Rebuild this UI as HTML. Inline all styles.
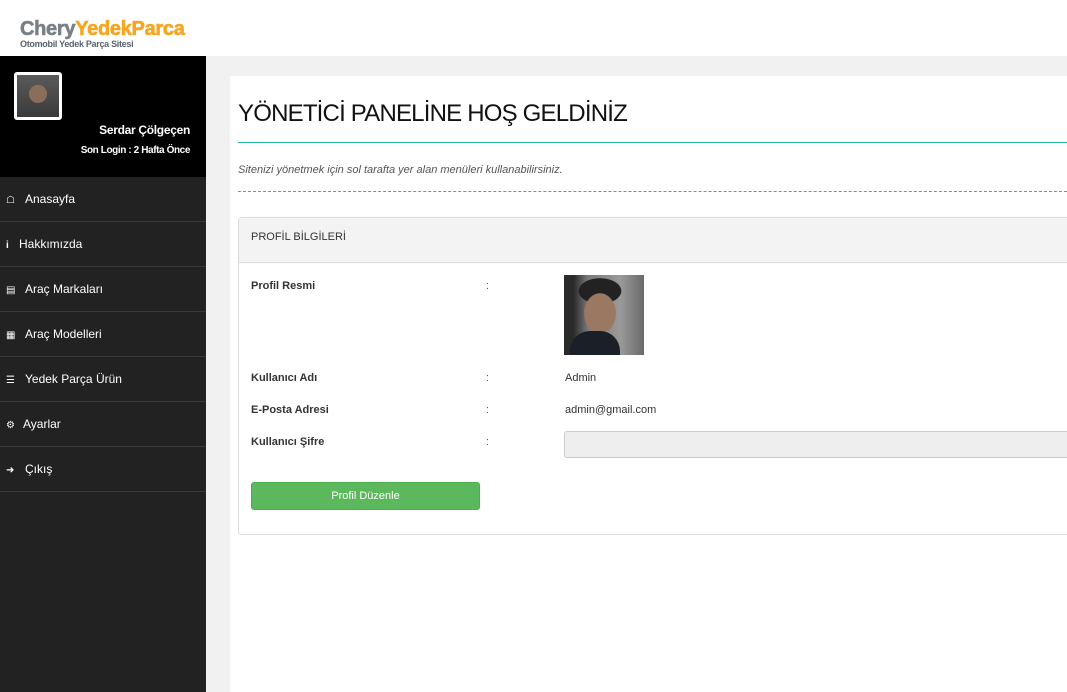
<!DOCTYPE html>
<html><head><meta charset="utf-8"><style>
*{margin:0;padding:0;box-sizing:border-box}
body{width:1067px;height:692px;overflow:hidden;background:#f1f1f1;font-family:"Liberation Sans","DejaVu Sans",sans-serif;position:relative}
.hdr{position:absolute;left:0;top:0;width:1067px;height:56px;background:#fff}
.logo{position:absolute;left:20px;top:18px;font-weight:bold;font-size:20px;letter-spacing:-0.3px;line-height:22px;-webkit-text-stroke:0.6px}
.logo .a{color:#7a8088}.logo .b{color:#f5a623}
.logo .s{position:absolute;left:0;top:21px;font-size:9px;color:#5a6470;white-space:nowrap;line-height:10px;-webkit-text-stroke:0}
.side{position:absolute;left:0;top:56px;width:206px;height:636px;background:#222}
.prof{height:121px;background:#000;position:relative}
.av{position:absolute;left:14px;top:16px;width:48px;height:48px;border:3px solid #fff;border-radius:3px;background:radial-gradient(circle at 50% 45%,#8a6e5c 0 28%,transparent 30%),linear-gradient(#5a5a5a,#3a3a3a)}
.nm{position:absolute;right:16px;top:67px;color:#fff;font-weight:bold;font-size:12px;letter-spacing:-0.3px}
.sl{position:absolute;right:16px;top:89px;color:#fff;font-weight:bold;font-size:10px;letter-spacing:-0.4px}
.mi{height:45px;border-bottom:1px solid #3a3a3a;color:#fff;font-size:12px;line-height:44px;padding-left:6px}
.mi i{display:inline-block;width:19px;font-style:normal;font-size:10px}
.main{position:absolute;left:230px;top:76px;width:837px;height:616px;background:#fff}
h1{position:absolute;left:8px;top:24px;font-size:24px;font-weight:normal;color:#111;letter-spacing:-0.8px}
.tl{position:absolute;left:8px;top:66px;right:0;border-top:1px solid #2bb5a5}
.it{position:absolute;left:8px;top:88px;font-style:italic;font-size:11px;color:#555}
.dl{position:absolute;left:8px;top:115px;right:0;border-top:1px dashed #2bb5a5}
.box{position:absolute;left:8px;top:141px;width:840px;height:318px;border:1px solid #ddd;border-radius:3px}
.bh{height:45px;background:#f3f3f3;border-bottom:1px solid #ddd;font-size:11px;color:#333;line-height:38px;padding-left:12px}
.lb{position:absolute;left:12px;font-size:11px;color:#333;font-weight:bold}
.co{position:absolute;left:247px;font-size:11px;color:#555}
.vl{position:absolute;left:326px;font-size:11px;color:#333}
.ph{position:absolute;left:325px;top:57px;width:80px;height:80px;background:radial-gradient(ellipse 22px 28px at 45% 48%,#9a7862 0 70%,transparent 74%),radial-gradient(ellipse 30px 18px at 45% 20%,#222 0 70%,transparent 72%),linear-gradient(90deg,#2a2a2a 0 12%,#7a7a7a 30%,#9a9a9a 70%,#6a6a6a);}
.ph:after{content:"";position:absolute;left:6px;bottom:0;width:50px;height:24px;background:#1a1f28;border-radius:20px 20px 0 0}
.inp{position:absolute;left:325px;top:213px;width:520px;height:27px;background:#eee;border:1px solid #ccc;border-radius:3px}
.btn{position:absolute;left:12px;top:264px;width:229px;height:28px;background:#5cb85c;border:1px solid #4cae4c;border-radius:3px;color:#fff;font-size:11px;text-align:center;line-height:26px}
</style></head><body>
<div class="hdr"><div class="logo"><span class="a">Chery</span><span class="b">YedekParca</span><div class="s">Otomobil Yedek Parça Sitesi</div></div></div>
<div class="side">
<div class="prof"><div class="av"></div><div class="nm">Serdar Çölgeçen</div><div class="sl">Son Login : 2 Hafta Önce</div></div>
<div class="mi"><i>&#9750;</i>Anasayfa</div>
<div class="mi"><i style="width:13px;font-weight:bold">i</i>Hakkımızda</div>
<div class="mi"><i>&#9636;</i>Araç Markaları</div>
<div class="mi"><i>&#9638;</i>Araç Modelleri</div>
<div class="mi"><i>&#9776;</i>Yedek Parça Ürün</div>
<div class="mi"><i style="width:17px">&#9881;</i>Ayarlar</div>
<div class="mi"><i>&#10140;</i>Çıkış</div>
</div>
<div class="main">
<h1>YÖNETİCİ PANELİNE HOŞ GELDİNİZ</h1>
<div class="tl"></div>
<div class="it">Sitenizi yönetmek için sol tarafta yer alan menüleri kullanabilirsiniz.</div>
<div class="dl"></div>
<div class="box">
<div class="bh">PROFİL BİLGİLERİ</div>
<div class="lb" style="top:62px">Profil Resmi</div><div class="co" style="top:62px">:</div><div class="ph"></div>
<div class="lb" style="top:154px">Kullanıcı Adı</div><div class="co" style="top:154px">:</div><div class="vl" style="top:154px">Admin</div>
<div class="lb" style="top:186px">E-Posta Adresi</div><div class="co" style="top:186px">:</div><div class="vl" style="top:186px">admin@gmail.com</div>
<div class="lb" style="top:218px">Kullanıcı Şifre</div><div class="co" style="top:218px">:</div><div class="inp"></div>
<div class="btn">Profil Düzenle</div>
</div>
</div>
</body></html>
